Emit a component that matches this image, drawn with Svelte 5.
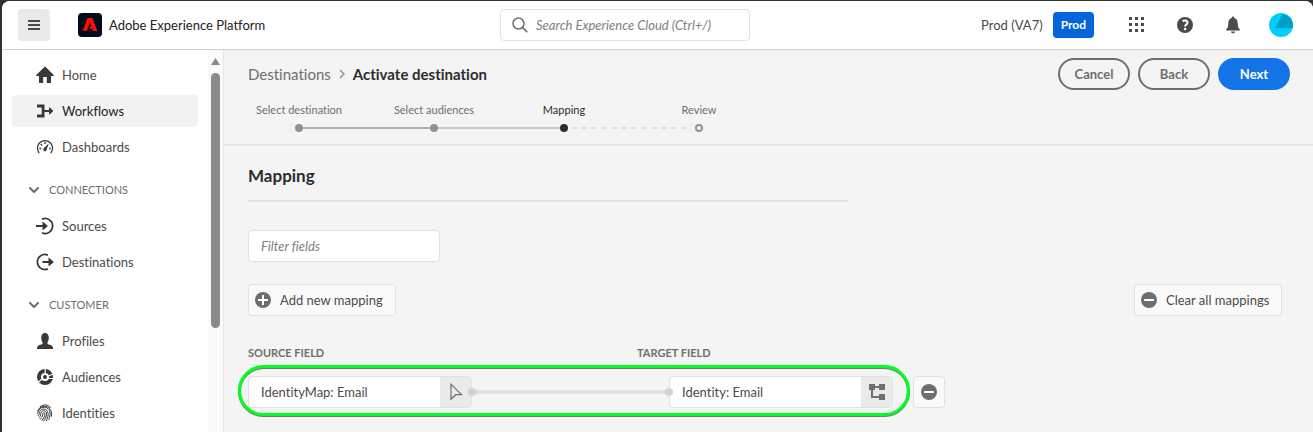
<script>
  const topItems = [
    { label: 'Home', icon: 'home' },
    { label: 'Workflows', icon: 'workflow', active: true },
    { label: 'Dashboards', icon: 'gauge' }
  ];
  const sections = [
    {
      title: 'CONNECTIONS',
      items: [
        { label: 'Sources', icon: 'login' },
        { label: 'Destinations', icon: 'logout' }
      ]
    },
    {
      title: 'CUSTOMER',
      items: [
        { label: 'Profiles', icon: 'user' },
        { label: 'Audiences', icon: 'audience' },
        { label: 'Identities', icon: 'fingerprint' }
      ]
    }
  ];
  const steps = [
    { label: 'Select destination', state: 'done', before: 'none', after: 'dark' },
    { label: 'Select audiences', state: 'done', before: 'dark', after: 'light' },
    { label: 'Mapping', state: 'current', before: 'light', after: 'dash' },
    { label: 'Review', state: 'todo', before: 'dash', after: 'none' }
  ];
  let search = $state('');
  let filter = $state('');
  let source = $state('IdentityMap: Email');
  let target = $state('Identity: Email');
</script>

{#snippet navIcon(name)}
  <svg class="icon" viewBox="0 0 18 18" aria-hidden="true">
    {#if name === 'home'}
      <path fill="currentColor" d="M17.7 9.1 9.6 1.1a.85.85 0 0 0-1.2 0L.3 9.1c-.4.4-.1.9.4.9H3v6.4c0 .3.2.6.6.6h3.2c.2 0 .4-.2.4-.4V11h3.6v5.6c0 .2.2.4.4.4h3.2c.4 0 .6-.3.6-.6V10h2.3c.5 0 .8-.5.4-.9z" />
    {:else if name === 'workflow'}
      <path fill="currentColor" d="M1 2.500h7.500v5.500H13V5.800c0-.4.400-.5.700-.3l3.200 3c.3.300.3.700 0 1l-3.200 3c-.3.200-.7.100-.7-.3V10H8.500v5.500H1v-3h4.700v-7H1z" />
    {:else if name === 'gauge'}
      <path fill="none" stroke="currentColor" stroke-width="1.300" stroke-linecap="round" d="M2.900 14.700a7.600 7.600 0 1 1 12.200 0" />
      <path fill="none" stroke="currentColor" stroke-width="1.400" d="M3.300 10.500h1.900M4.700 6.100l1.300 1.300M9 4v1.900M14.700 10.500h-1.600" />
      <path fill="currentColor" d="m12.900 5.300-2.300 6.200a1.700 1.700 0 1 1-2.600-1.400z" />
    {:else if name === 'login'}
      <path fill="none" stroke="currentColor" stroke-width="1.700" stroke-linecap="round" d="M6.700 1.900A7.500 7.500 0 1 1 6.700 16.100" />
      <path fill="currentColor" d="M0 8h6.500V5.300c0-.4.400-.6.700-.3l4.200 3.600c.3.200.3.600 0 .8l-4.200 3.600c-.3.300-.7.100-.7-.3V10H0z" />
    {:else if name === 'logout'}
      <path fill="none" stroke="currentColor" stroke-width="1.700" stroke-linecap="round" d="M11.300 1.900A7.500 7.500 0 1 0 11.300 16.100" />
      <path fill="currentColor" d="M6.500 8h6V5.300c0-.4.400-.6.700-.3l4.200 3.600c.3.200.3.600 0 .8l-4.200 3.600c-.3.300-.7.100-.7-.3V10h-6z" />
    {:else if name === 'user'}
      <path fill="currentColor" d="M11.400 11.200c0-.8.200-1 .6-1.600.5-1 .8-2.400.8-4C12.800 2.700 11.300 1 9 1S5.200 2.700 5.200 5.600c0 1.600.3 3 .8 4 .4.600.6.800.6 1.600 0 .7-.5 1.100-1.300 1.200C2.500 12.900 1 14.200 1 16.300V17h16v-.7c0-2.100-1.500-3.400-4.300-3.900-.8-.1-1.300-.5-1.300-1.200z" />
    {:else if name === 'audience'}
      <circle cx="9" cy="9" r="6" fill="none" stroke="currentColor" stroke-width="4" />
      <circle cx="9" cy="9" r="2" fill="currentColor" />
      <path fill="none" stroke="#fff" stroke-width="1.200" d="M9.200 0v5.500M11.800 8.300l6-2.500M5.700 11.300l-4 3.500M12.200 10.500h4.600" />
    {:else}
      <g fill="none" stroke="currentColor" stroke-width="1" stroke-linecap="round">
        <path d="M4 2.900C7-.1 12.500.300 14.600 3.800M2 6.300C3.800 2.200 9.700.800 13.200 4.200c2 2 2.600 4.500 2.200 8.200M1.700 9.300c.2-3.500 3-6 6.600-6 4 0 6.200 3.300 5.700 7.300-.2 2-.5 3.400-1.100 4.900M2.100 11.700c1.500-1 .8-2.600 1.600-4.100 1.500-3.200 6.300-3.500 8 .100 1.200 2.600-.1 6.500-1.300 9M3 13.600c2.300-1.700 1.400-4.100 2.400-5.600 1.200-1.800 4.200-1.500 4.900.700.700 2.600-.9 6.100-2.400 8.200M4.300 15.300C7 13 6.300 10.600 7 9.300c.5-.9 1.700-.700 1.800.400.300 2.500-1.200 4.900-2.700 6.700" />
      </g>
    {/if}
  </svg>
{/snippet}

{#snippet navItem(item)}
  <a href="#{item.icon}" class="nav-item" class:active={item.active}>
    {@render navIcon(item.icon)}
    <span>{item.label}</span>
  </a>
{/snippet}

{#snippet minusIcon()}
  <svg class="action-icon" viewBox="0 0 16 16" aria-hidden="true">
    <circle cx="8" cy="8" r="8" fill="#6e6e6e" />
    <rect x="3" y="7" width="10" height="2" rx=".4" fill="#fff" />
  </svg>
{/snippet}

<div class="frame">
  <div class="app">
    <header class="topbar">
      <div class="brand">
        <button class="menu" aria-label="Menu">
          <svg width="12" height="10" viewBox="0 0 12 10" aria-hidden="true"><path fill="#4b4b4b" d="M0 0h12v2H0zM0 4h12v2H0zM0 8h12v2H0z" /></svg>
        </button>
        <svg class="logo" viewBox="0 0 24 24" aria-hidden="true">
          <rect width="24" height="24" rx="4" fill="#000b1d" />
          <path fill="#fa0f00" d="M9.500 5h5L19.300 18h-4.200l-.8-1.900c-.1-.3-.3-.4-.6-.4h-2.600l1.400-2.500h1L12 9.600 9 17.600c-.1.300-.3.400-.5.400H4.700z" />
        </svg>
        <span class="product">Adobe Experience Platform</span>
      </div>
      <label class="search">
        <svg width="16" height="16" viewBox="0 0 16 16" aria-hidden="true"><circle cx="6.500" cy="6.500" r="5.500" fill="none" stroke="#6e6e6e" stroke-width="1.500" /><path d="m10.500 10.500 4.700 4.700" stroke="#6e6e6e" stroke-width="1.700" /></svg>
        <input type="text" aria-label="Search" placeholder="Search Experience Cloud (Ctrl+/)" bind:value={search} />
      </label>
      <div class="tools">
        <span class="sandbox">Prod (VA7)</span>
        <span class="badge">Prod</span>
        <div class="tool-icons">
          <button aria-label="Apps">
            <svg width="16" height="16" viewBox="0 0 16 16" aria-hidden="true"><path fill="#4b4b4b" d="M0 0h3v3H0zM6 0h3v3H6zM12 0h3v3h-3zM0 6h3v3H0zM6 6h3v3H6zM12 6h3v3h-3zM0 12h3v3H0zM6 12h3v3H6zM12 12h3v3h-3z" /></svg>
          </button>
          <button aria-label="Help">
            <svg width="16" height="16" viewBox="0 0 16 16" aria-hidden="true"><circle cx="8" cy="8" r="8" fill="#4b4b4b" /><path d="M5.600 4.200C7.600 3 10.500 3.300 10.500 5.600 10.500 7.500 8.100 7.600 8.100 9.500" fill="none" stroke="#fff" stroke-width="2" /><circle cx="8.100" cy="12" r="1.300" fill="#fff" /></svg>
          </button>
          <button aria-label="Notifications">
            <svg width="16" height="18" viewBox="0 0 16 18" aria-hidden="true"><path fill="#4b4b4b" d="M8 .5c-.8 0-1.300.5-1.200 1.500C4.500 2.500 3.300 4.400 3.300 7c0 3.500-.6 4.800-2 6.200-.5.500-.3 1.300.4 1.300h12.600c.7 0 .9-.8.4-1.300-1.400-1.400-2-2.700-2-6.200 0-2.600-1.200-4.500-3.500-5C9.300 1 8.800.5 8 .5zM6 15.500h4c0 1-.8 1.800-2 1.800s-2-.8-2-1.800z" /></svg>
          </button>
          <button aria-label="Account">
            <svg width="24" height="24" viewBox="0 0 24 24" aria-hidden="true"><circle cx="12" cy="12" r="12" fill="#00cdff" /><path fill="#009fc9" d="M12.800 1.500C18.500 1.200 23.500 6 23.900 11.500c.1 1.400-.1 2.600-.4 3.700L6.800 15z" /></svg>
          </button>
        </div>
      </div>
    </header>

    <div class="body">
      <aside class="sidebar">
        <nav>
          {#each topItems as item}{@render navItem(item)}{/each}
          {#each sections as section}
            <button class="section">
              <svg width="10" height="7" viewBox="0 0 10 7" aria-hidden="true"><path d="m1 1 4 4 4-4" fill="none" stroke="#6e6e6e" stroke-width="2" stroke-linecap="round" stroke-linejoin="round" /></svg>
              <span>{section.title}</span>
            </button>
            {#each section.items as item}{@render navItem(item)}{/each}
          {/each}
        </nav>
        <div class="scroll" aria-hidden="true">
          <svg width="9" height="7" viewBox="0 0 9 7"><path d="M4.500 0 9 7H0z" fill="#8b8b8b" /></svg>
          <div class="thumb"></div>
        </div>
      </aside>

      <main>
        <div class="page-head">
          <div class="title-row">
            <div class="crumbs">
              <a href="#destinations">Destinations</a>
              <svg width="6" height="10" viewBox="0 0 6 10" aria-hidden="true"><path d="m1 1 4 4-4 4" fill="none" stroke="#909090" stroke-width="1.500" /></svg>
              <h1>Activate destination</h1>
            </div>
            <div class="actions">
              <button class="pill">Cancel</button>
              <button class="pill">Back</button>
              <button class="pill primary">Next</button>
            </div>
          </div>
          <ol class="steps">
            {#each steps as step}
              <li class={step.state}>
                <span class="step-label">{step.label}</span>
                <span class="track">
                  <span class="line lead {step.before}"></span>
                  <span class="dot"></span>
                  <span class="line {step.after}"></span>
                </span>
              </li>
            {/each}
          </ol>
        </div>

        <section class="content">
          <h2>Mapping</h2>
          <input class="filter" type="text" aria-label="Filter fields" placeholder="Filter fields" bind:value={filter} />
          <div class="toolbar">
            <button class="quiet">
              <svg class="action-icon" viewBox="0 0 16 16" aria-hidden="true"><circle cx="8" cy="8" r="8" fill="#6e6e6e" /><path fill="#fff" d="M7 3h2v4h4v2H9v4H7V9H3V7h4z" /></svg>
              <span>Add new mapping</span>
            </button>
            <button class="quiet">
              {@render minusIcon()}
              <span>Clear all mappings</span>
            </button>
          </div>
          <div class="columns">
            <label for="source">SOURCE FIELD</label>
            <label for="target">TARGET FIELD</label>
          </div>
          <div class="mapping">
            <div class="pair">
              <div class="field">
                <input id="source" type="text" bind:value={source} />
                <button aria-label="Select source field">
                  <svg width="16" height="18" viewBox="0 0 16 18" aria-hidden="true"><path d="M3 1.200 13.500 11.700H7.700L3 16.300z" fill="none" stroke="#6e6e6e" stroke-width="1.200" /></svg>
                </button>
              </div>
              <div class="link" aria-hidden="true"></div>
              <div class="field">
                <input id="target" type="text" bind:value={target} />
                <button aria-label="Select target field">
                  <svg width="16" height="16" viewBox="0 0 16 16" aria-hidden="true"><path fill="#6e6e6e" d="M0 0h6v2h4V0h6v6h-6V4H6v2H4v6h6v-2h6v6h-6v-2H2V6H0z" /></svg>
                </button>
              </div>
            </div>
            <button class="remove" aria-label="Remove mapping">{@render minusIcon()}</button>
          </div>
        </section>
      </main>
    </div>
  </div>
</div>

<style>
  :global(body) {
    margin: 0;
  }
  .frame {
    box-sizing: border-box;
    display: flex;
    min-height: 100vh;
    padding: 1px 0 0 2px;
    background: #323232;
    font-family: Lato, "Open Sans", sans-serif;
    font-size: 13px;
    line-height: 18px;
    font-variant-ligatures: none;
    color: #4b4b4b;
  }
  .frame :global(*) {
    box-sizing: border-box;
  }
  button,
  input {
    font: inherit;
    font-variant-ligatures: none;
    color: inherit;
    margin: 0;
  }
  button {
    padding: 0;
    border: 0;
    background: none;
    cursor: pointer;
  }
  svg {
    display: block;
    flex: none;
  }
  .app {
    flex: 1;
    min-width: 0;
    display: flex;
    flex-direction: column;
    background: #f4f4f4;
    border-radius: 8px 8px 0 0;
    overflow: hidden;
  }
  .topbar {
    display: grid;
    grid-template-columns: minmax(0, 498fr) 250px minmax(0, 563fr);
    align-items: center;
    padding: 8px 0;
    background: #fff;
    border-bottom: 1px solid #d0d0d0;
  }
  .brand {
    display: flex;
    align-items: center;
    padding-left: 16px;
    color: #222;
    white-space: nowrap;
  }
  .menu {
    display: grid;
    place-items: center;
    width: 32px;
    height: 32px;
    border-radius: 4px;
    background: #eaeaea;
  }
  .logo {
    width: 24px;
    height: 24px;
    margin: 0 7px 0 28px;
  }
  .search {
    display: flex;
    align-items: center;
    gap: 8px;
    height: 32px;
    padding: 0 11px;
    border: 1px solid #e1e1e1;
    border-radius: 4px;
  }
  .search input {
    flex: 1;
    min-width: 0;
    padding: 0;
    border: 0;
    outline: 0;
    background: none;
  }
  input::placeholder {
    font-style: italic;
    color: #808080;
    opacity: 1;
  }
  .tools {
    display: flex;
    align-items: center;
    justify-content: flex-end;
    padding-right: 20px;
    white-space: nowrap;
  }
  .badge {
    margin: 0 31px 0 10px;
    padding: 4px 8px;
    border-radius: 4px;
    background: #0265dc;
    color: #fff;
    font-size: 12px;
    font-weight: 700;
  }
  .tool-icons {
    display: flex;
    gap: 24px;
  }
  .tool-icons button {
    display: grid;
    place-items: center;
    width: 24px;
    height: 24px;
  }
  .body {
    flex: 1;
    display: flex;
  }
  .sidebar {
    flex: none;
    display: flex;
    width: 222px;
    background: #fff;
    border-right: 1px solid #e6e6e6;
  }
  nav {
    flex: 1;
    display: flex;
    flex-direction: column;
    gap: 4px;
    padding: 9px 10px 0;
  }
  .nav-item {
    display: flex;
    align-items: center;
    gap: 8px;
    height: 32px;
    padding-left: 24px;
    border-radius: 4px;
    color: #4b4b4b;
    text-decoration: none;
  }
  .nav-item.active {
    background: #f2f2f2;
    color: #222;
  }
  .icon {
    width: 18px;
    height: 18px;
    color: #383838;
  }
  .section {
    display: flex;
    align-items: center;
    gap: 10px;
    height: 16px;
    margin: 15px 0 8px;
    padding-left: 17px;
    font-size: 11px;
    line-height: 16px;
    color: #6e6e6e;
  }
  .scroll {
    display: flex;
    flex-direction: column;
    align-items: center;
    gap: 8px;
    width: 15px;
    padding-top: 8px;
    background: #fafafa;
  }
  .thumb {
    width: 9px;
    height: 255px;
    border-radius: 5px;
    background: #8b8b8b;
  }
  main {
    flex: 1;
    min-width: 0;
  }
  .page-head {
    padding-top: 8px;
    border-bottom: 2px solid #e8e8e8;
  }
  .title-row {
    display: flex;
    align-items: center;
    justify-content: space-between;
    padding: 0 23px 0 24px;
  }
  .crumbs {
    display: flex;
    align-items: center;
    gap: 8px;
    font-size: 15px;
    line-height: 20px;
  }
  .crumbs a {
    color: #6e6e6e;
    text-decoration: none;
  }
  h1,
  h2 {
    margin: 0;
    color: #2c2c2c;
  }
  h1 {
    font-size: 15px;
    line-height: 20px;
  }
  .actions {
    display: flex;
    gap: 8px;
  }
  .pill {
    width: 72px;
    height: 32px;
    border: 2px solid #6e6e6e;
    border-radius: 16px;
    color: #6e6e6e;
    font-weight: 700;
  }
  .pill.primary {
    border-color: #1473e6;
    background: #1473e6;
    color: #fff;
  }
  .steps {
    display: grid;
    grid-template-columns: 140px 130px 130px 140px;
    margin: 0;
    padding: 12px 0 12px 5px;
    list-style: none;
    font-size: 11px;
    line-height: 16px;
    color: #6e6e6e;
  }
  .steps li {
    display: flex;
    flex-direction: column;
    gap: 6px;
    text-align: center;
  }
  .steps .current {
    color: #2c2c2c;
  }
  .track {
    display: flex;
    align-items: center;
  }
  .dot {
    width: 8px;
    height: 8px;
    border: 2px solid #909090;
    border-radius: 4px;
  }
  .done .dot {
    background: #909090;
  }
  .current .dot {
    border-color: #2c2c2c;
    background: #2c2c2c;
  }
  .line {
    flex: 1;
    height: 2px;
  }
  .line.dark {
    background: #b1b1b1;
  }
  .line.light {
    background: #c8c8c8;
  }
  .line.dash {
    background: repeating-linear-gradient(90deg, transparent 0 3px, #e0e0e0 3px 9px, transparent 9px 10px) no-repeat;
  }
  .line.lead.dash {
    background: repeating-linear-gradient(90deg, transparent 0 2px, #e0e0e0 2px 8px, transparent 8px 10px) no-repeat;
    background-size: calc(100% - 4px) 100%;
  }
  .content {
    padding: 18px 31px 0 24px;
  }
  h2 {
    max-width: 600px;
    padding-bottom: 12px;
    border-bottom: 2px solid #e1e1e1;
    font-size: 17px;
    line-height: 24px;
  }
  .filter {
    display: block;
    width: 192px;
    height: 32px;
    margin-top: 28px;
    padding: 0 12px;
    border: 1px solid #e1e1e1;
    border-radius: 4px;
    background: #fff;
  }
  .toolbar {
    display: flex;
    justify-content: space-between;
    margin-top: 22px;
  }
  .quiet {
    display: flex;
    align-items: center;
    gap: 9px;
    min-width: 148px;
    height: 32px;
    padding: 0 10px 0 6px;
    border: 1px solid #e1e1e1;
    border-radius: 4px;
    background: #fafafa;
  }
  .action-icon {
    width: 16px;
    height: 16px;
  }
  .columns {
    display: grid;
    grid-template-columns: 389px 1fr;
    margin-top: 29px;
    font-size: 11px;
    font-weight: 700;
    line-height: 16px;
    color: #6e6e6e;
  }
  .mapping {
    display: flex;
    gap: 20px;
    margin-top: 15px;
  }
  .pair {
    position: relative;
    display: flex;
    align-items: center;
  }
  .pair::after {
    content: "";
    position: absolute;
    inset: -11px -17px -8px -10px;
    border: 3px solid #00ff22;
    border-radius: 26px;
    filter: drop-shadow(0 1px 0 #777);
    pointer-events: none;
  }
  .field {
    display: flex;
    width: 224px;
    height: 32px;
    border: 1px solid #e1e1e1;
    border-radius: 4px;
    background: #fff;
    overflow: hidden;
  }
  .field input {
    flex: 1;
    min-width: 0;
    padding: 0 12px;
    border: 0;
    outline: 0;
    background: none;
  }
  .field button {
    display: grid;
    place-items: center;
    width: 31px;
    background: #eaeaea;
  }
  .link {
    position: relative;
    width: 197px;
    height: 4px;
    background: #e1e1e1;
  }
  .link::before,
  .link::after {
    content: "";
    position: absolute;
    z-index: 1;
    top: -2px;
    left: -4px;
    width: 8px;
    height: 8px;
    border-radius: 4px;
    background: #d3d3d3;
  }
  .link::after {
    left: auto;
    right: -4px;
  }
  .remove {
    display: grid;
    place-items: center;
    width: 32px;
    height: 32px;
    border: 1px solid #e1e1e1;
    border-radius: 4px;
    background: #fafafa;
  }
</style>
